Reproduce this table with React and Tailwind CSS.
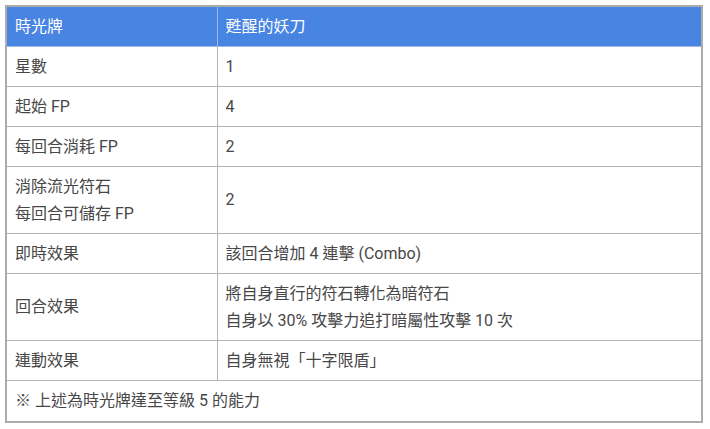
export default function App() {
  const rows = [
    [["星數"], ["1"]],
    [["起始 FP"], ["4"]],
    [["每回合消耗 FP"], ["2"]],
    [["消除流光符石", "每回合可儲存 FP"], ["2"]],
    [["即時效果"], ["該回合增加 4 連擊 (Combo)"]],
    [["回合效果"], ["將自身直行的符石轉化為暗符石", "自身以 30% 攻擊力追打暗屬性攻擊 10 次"]],
    [["連動效果"], ["自身無視「十字限盾」"]],
  ];
  return (
    <div
      className="w-[710px] h-[429px] bg-white pt-[5px] pl-[5px]"
      style={{ fontFamily: '"Roboto", "Noto Sans CJK TC", sans-serif' }}
    >
      <table className="w-[698px] border-collapse border-2 border-[#ababab] text-[16px] leading-[27px] text-[#474747]">
        <thead>
          <tr className="bg-[#4884e2] text-white h-[40px]">
            <th className="w-[211px] text-left font-normal px-[8px] border border-[#9fb9e0]">時光牌</th>
            <th className="text-left font-normal px-[8px] border border-[#9fb9e0]">甦醒的妖刀</th>
          </tr>
        </thead>
        <tbody>
          {rows.map((r, i) => (
            <tr key={i}>
              <td className="px-[8px] py-[6px] border border-[#b4b4b4] align-middle">
                {r[0].map((t, j) => (
                  <div key={j}>{t}</div>
                ))}
              </td>
              <td className="px-[8px] py-[6px] border border-[#b4b4b4] align-middle">
                {r[1].map((t, j) => (
                  <div key={j}>{t}</div>
                ))}
              </td>
            </tr>
          ))}
          <tr>
            <td colSpan={2} className="px-[8px] py-[6.5px] border border-[#b4b4b4]">
              ※ 上述為時光牌達至等級 5 的能力
            </td>
          </tr>
        </tbody>
      </table>
    </div>
  );
}
